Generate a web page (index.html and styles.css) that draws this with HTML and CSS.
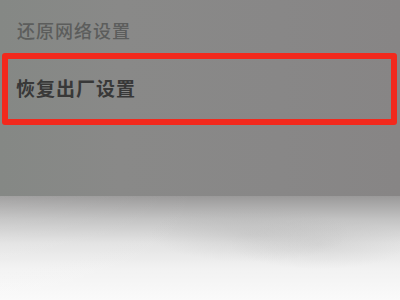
FILE: index.html
```html
<!DOCTYPE html>
<html lang="zh-CN">
<head>
    <meta charset="UTF-8">
    <meta name="viewport" content="width=device-width, initial-scale=1.0">
    <title>设置</title>
    <link rel="stylesheet" href="styles.css">
</head>
<body>
    <div class="screen">
        <div class="list">
            <div class="item item-dim">还原网络设置</div>
            <div class="item item-marked">恢复出厂设置</div>
        </div>
        <div class="footer"></div>
    </div>
</body>
</html>
```

FILE: styles.css
```css
body {
    margin: 0;
    font-family: "Noto Sans CJK SC", "Noto Sans", sans-serif;
    background-color: #888887;
}
.screen {
    width: 400px;
    height: 300px;
    overflow: hidden;
}
.list {
    height: 196px;
    background: linear-gradient(90deg, #858885 0%, #898988 30%, #888787 70%, #878585 100%);
}
.item {
    padding-left: 17px;
    font-size: 18px;
    letter-spacing: 1px;
}
.item-dim {
    height: 53px;
    padding-top: 20px;
    line-height: 20px;
    box-sizing: border-box;
    color: #5c5d5c;
    font-weight: 500;
}
.item-marked {
    margin: 0 3px 0 2px;
    height: 72px;
    box-sizing: border-box;
    padding-left: 8px;
    border: 6px solid #f2291d;
    border-radius: 3px;
    line-height: 58px;
    font-size: 19px;
    font-weight: bold;
    color: #383838;
}
.footer {
    height: 104px;
    background:
        radial-gradient(ellipse 100px 28px at 250px 38px, rgba(160,160,160,0.22), rgba(160,160,160,0)),
        radial-gradient(ellipse 90px 25px at 320px 48px, rgba(160,160,160,0.2), rgba(160,160,160,0)),
        linear-gradient(90deg, rgba(255,255,255,0.08), rgba(255,255,255,0) 50%),
        linear-gradient(180deg, #9a9999 0%, #c2c2c2 22%, #e2e2e2 45%, #f2f2f2 70%, #fafafa 100%);
}
```
